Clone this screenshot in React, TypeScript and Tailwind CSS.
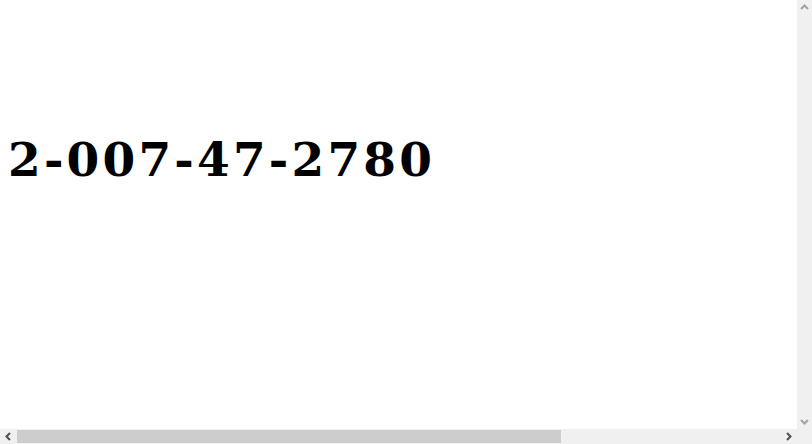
const Chevron = ({ dir, color }: { dir: 'up' | 'down' | 'left' | 'right'; color: string }) => {
  const pts = {
    up: '1,6 4.5,2.5 8,6',
    down: '1,3 4.5,6.5 8,3',
    left: '6,1 2.5,4.5 6,8',
    right: '3,1 6.5,4.5 3,8',
  }[dir];
  return (
    <svg width="9" height="9" viewBox="0 0 9 9">
      <polyline points={pts} fill="none" stroke={color} strokeWidth="2" />
    </svg>
  );
};

export default function App() {
  return (
    <div className="flex h-[444px] w-[812px] flex-col overflow-hidden bg-white">
      <div className="flex min-h-0 flex-1">
        {/* page content */}
        <div className="min-w-0 flex-1 overflow-hidden px-2 pt-[133px]">
          <div
            className="whitespace-nowrap text-[47px] font-bold leading-[1.15] tracking-[3.2px] text-black"
            style={{ fontFamily: '"DejaVu Serif", serif' }}
          >
            2-007-47-2780
          </div>
        </div>
        {/* vertical scrollbar, nothing to scroll */}
        <div className="flex w-[15px] flex-col items-center justify-between bg-[#f0f0f0] py-[3px]">
          <Chevron dir="up" color="#a3a3a3" />
          <Chevron dir="down" color="#a3a3a3" />
        </div>
      </div>
      {/* horizontal scrollbar */}
      <div className="flex h-[15px] items-center bg-[#f0f0f0]">
        <div className="flex w-[17px] justify-center">
          <Chevron dir="left" color="#505050" />
        </div>
        <div className="flex flex-1 items-center">
          <div className="h-[13px] w-[544px] bg-[#cdcdcd]" />
        </div>
        <div className="flex w-[17px] justify-center">
          <Chevron dir="right" color="#505050" />
        </div>
        <div className="w-[15px]" />
      </div>
    </div>
  );
}
